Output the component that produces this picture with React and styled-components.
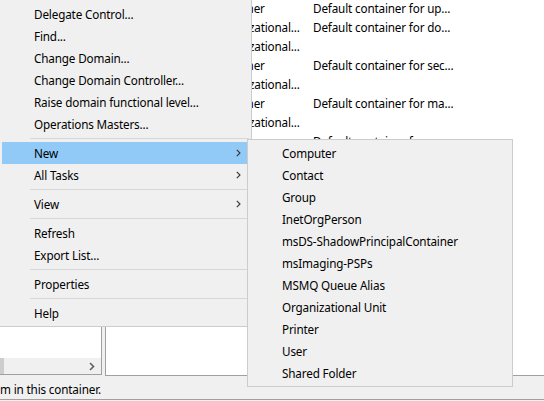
import React from 'react';
import styled, { createGlobalStyle } from 'styled-components';

const GlobalStyle = createGlobalStyle`
  html, body {
    margin: 0;
    padding: 0;
    background: #f0f0f0;
    overflow: hidden;
  }
  body {
    font-family: "Segoe UI", "Noto Sans", "Open Sans", sans-serif;
    font-size: 11.7px;
    letter-spacing: -0.15px;
    color: #000;
  }
`;

const Window = styled.div`
  position: relative;
  width: 544px;
  height: 401px;
  display: flex;
  flex-direction: column;
  overflow: hidden;
  background: #f0f0f0;
`;

const Panes = styled.div`
  display: flex;
  height: 376px;
  gap: 3px;
`;

const TreePane = styled.div`
  box-sizing: border-box;
  width: 102px;
  height: 375px;
  background: #fff;
  border-right: 1px solid #a0a0a0;
  border-bottom: 1px solid #a0a0a0;
  display: flex;
  flex-direction: column;
  justify-content: flex-end;
`;

const HScroll = styled.div`
  height: 16px;
  background: #f0f0f0;
  display: flex;
  align-items: center;
  justify-content: space-between;
  padding-right: 6px;
`;

const Thumb = styled.div`
  width: 4px;
  height: 16px;
  background: #cdcdcd;
`;

const ListPane = styled.div`
  box-sizing: border-box;
  flex: 1;
  height: 376px;
  background: #fff;
  border-left: 1px solid #a0a0a0;
  border-bottom: 1px solid #a0a0a0;
  overflow: hidden;
`;

const ListBody = styled.div`
  margin-top: -2px;
`;

const Row = styled.div`
  display: grid;
  grid-template-columns: 106px 101px 1fr;
  height: 19px;
  align-items: center;
  white-space: nowrap;
`;

const Cell = styled.div`
  overflow: hidden;
`;

const StatusBar = styled.div`
  box-sizing: border-box;
  height: 24px;
  border-bottom: 1px solid #a0a0a0;
  display: flex;
  align-items: center;
  white-space: nowrap;
  padding-top: 3px;
`;

const Menu = styled.div`
  position: absolute;
  box-sizing: border-box;
  left: ${({ $left }) => $left}px;
  top: ${({ $top }) => $top}px;
  width: ${({ $width }) => $width}px;
  background: #f0f0f0;
  border: 1px solid #cccccc;
  padding: ${({ $pad }) => $pad};
  display: flex;
  flex-direction: column;
`;

const Item = styled.div`
  box-sizing: border-box;
  height: 22px;
  display: flex;
  align-items: center;
  padding: 0 8px 1px 32px;
  white-space: nowrap;
  background: ${({ $active }) => ($active ? '#91c9f7' : 'transparent')};
`;

const Label = styled.span`
  flex: 1;
`;

const Separator = styled.div`
  height: 7px;
  display: flex;
  align-items: center;
  margin-left: 28px;
  &::after {
    content: '';
    flex: 1;
    height: 1px;
    background: #d7d7d7;
  }
`;

const Chevron = () => (
  <svg width="5" height="8" viewBox="0 0 5 8">
    <polyline points="0.8,0.8 4,4 0.8,7.2" fill="none" stroke="#333" strokeWidth="1.1" />
  </svg>
);

const ScrollArrow = () => (
  <svg width="6" height="9" viewBox="0 0 6 9">
    <polyline points="1,1 4.5,4.5 1,8" fill="none" stroke="#606060" strokeWidth="1.6" />
  </svg>
);

const rows = [
  ['Container', 'Default container for up...'],
  ['Organizational...', 'Default container for do...'],
  ['Organizational...', ''],
  ['Container', 'Default container for sec...'],
  ['Organizational...', ''],
  ['Container', 'Default container for ma...'],
  ['Organizational...', ''],
  ['Container', 'Default container for up...'],
];

const mainMenu = [
  { label: 'Delegate Control...' },
  { label: 'Find...' },
  { label: 'Change Domain...' },
  { label: 'Change Domain Controller...' },
  { label: 'Raise domain functional level...' },
  { label: 'Operations Masters...' },
  { sep: true },
  { label: 'New', sub: true, active: true },
  { label: 'All Tasks', sub: true },
  { sep: true },
  { label: 'View', sub: true },
  { sep: true },
  { label: 'Refresh' },
  { label: 'Export List...' },
  { sep: true },
  { label: 'Properties' },
  { sep: true },
  { label: 'Help' },
];

const newMenu = [
  'Computer',
  'Contact',
  'Group',
  'InetOrgPerson',
  'msDS-ShadowPrincipalContainer',
  'msImaging-PSPs',
  'MSMQ Queue Alias',
  'Organizational Unit',
  'Printer',
  'User',
  'Shared Folder',
];

export default function App() {
  return (
    <>
      <GlobalStyle />
      <Window>
        <Panes>
          <TreePane>
            <HScroll>
              <Thumb />
              <ScrollArrow />
            </HScroll>
          </TreePane>
          <ListPane>
            <ListBody>
              {rows.map((r, i) => (
                <Row key={i}>
                  <Cell />
                  <Cell>{r[0]}</Cell>
                  <Cell>{r[1]}</Cell>
                </Row>
              ))}
            </ListBody>
          </ListPane>
        </Panes>
        <StatusBar>m in this container.</StatusBar>

        <Menu $left={-1} $top={-1} $width={253} $pad="3px 2px 2px 2px">
          {mainMenu.map((m, i) =>
            m.sep ? (
              <Separator key={i} />
            ) : (
              <Item key={i} $active={m.active}>
                <Label>{m.label}</Label>
                {m.sub && <Chevron />}
              </Item>
            )
          )}
        </Menu>

        <Menu $left={247} $top={139} $width={266} $pad="2px">
          {newMenu.map((label) => (
            <Item key={label}>
              <Label>{label}</Label>
            </Item>
          ))}
        </Menu>
      </Window>
    </>
  );
}
